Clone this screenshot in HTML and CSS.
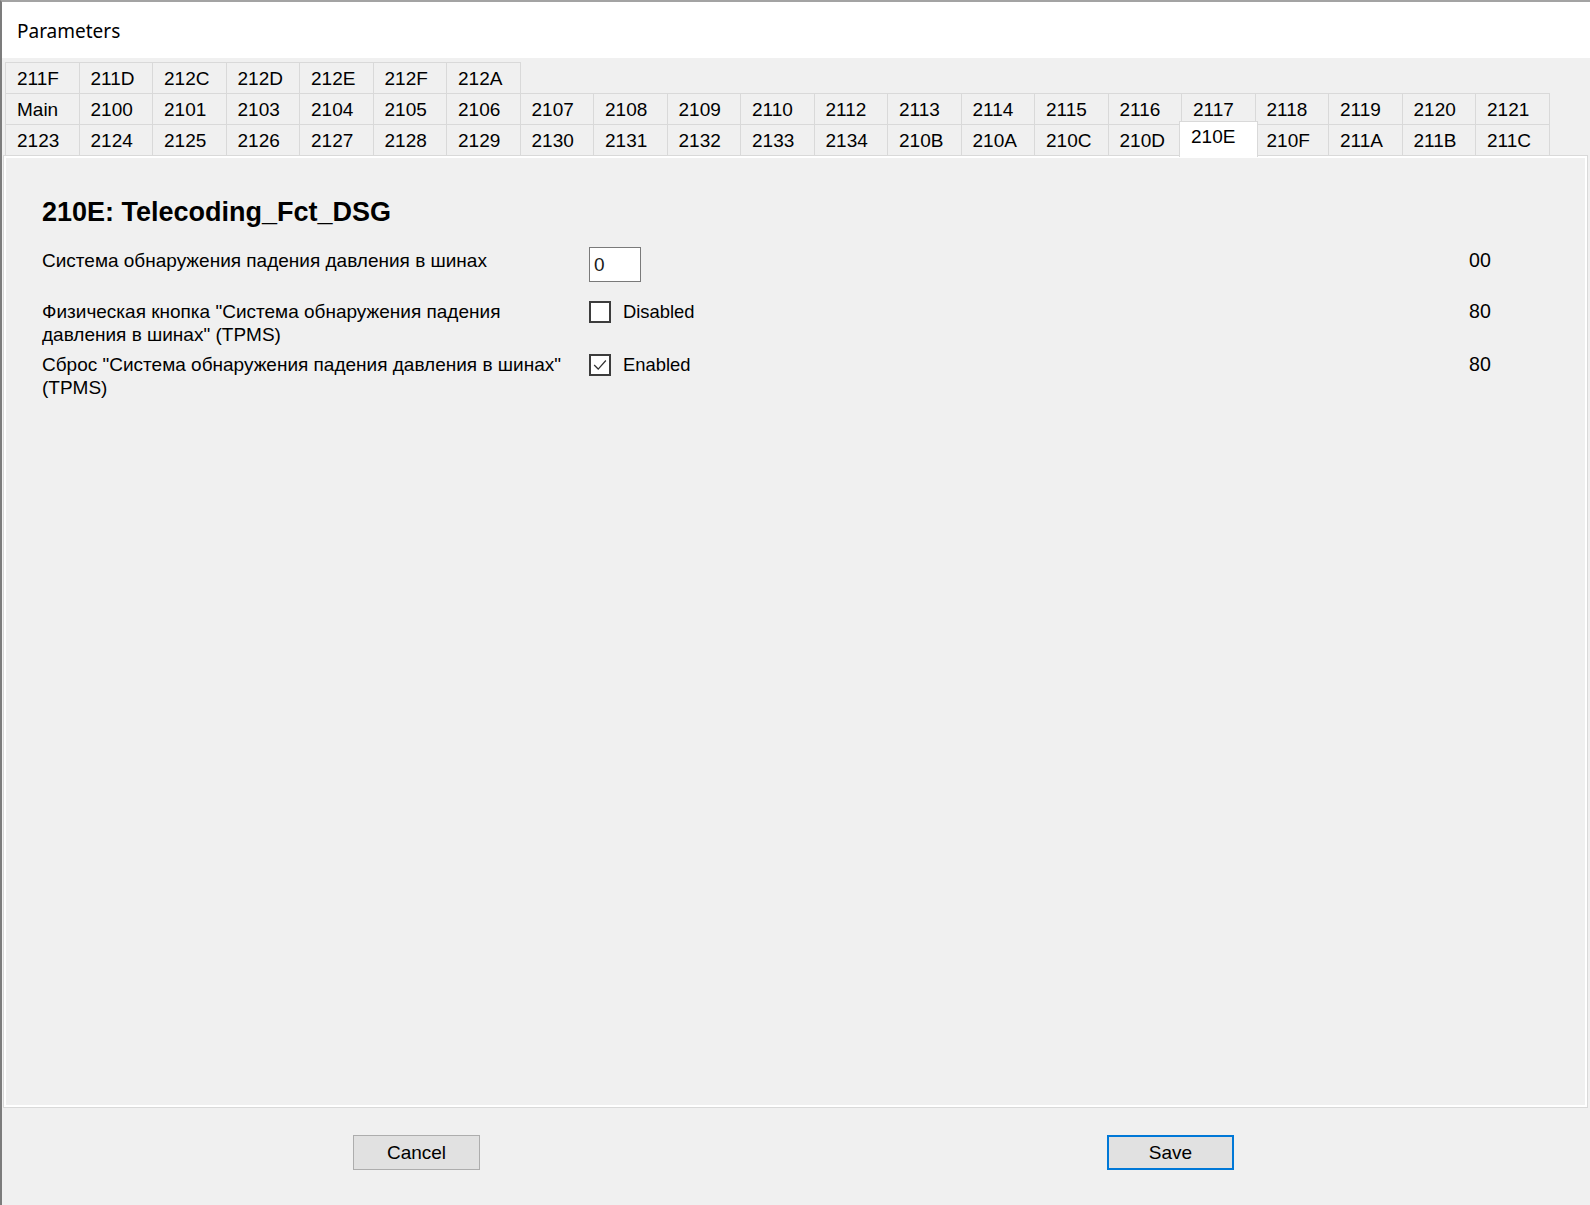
FILE: index.html
```html
<!DOCTYPE html>
<html lang="ru">
<head>
    <meta charset="UTF-8">
    <meta name="viewport" content="width=device-width, initial-scale=1.0">
    <title>Parameters</title>
    <link rel="stylesheet" href="styles.css">
</head>
<body>
    <div class="window">
        <div class="titlebar">Parameters</div>

        <div class="tabs">
            <div class="tab-row">
                <div class="tab">211F</div>
                <div class="tab">211D</div>
                <div class="tab">212C</div>
                <div class="tab">212D</div>
                <div class="tab">212E</div>
                <div class="tab">212F</div>
                <div class="tab">212A</div>
            </div>
            <div class="tab-row">
                <div class="tab">Main</div>
                <div class="tab">2100</div>
                <div class="tab">2101</div>
                <div class="tab">2103</div>
                <div class="tab">2104</div>
                <div class="tab">2105</div>
                <div class="tab">2106</div>
                <div class="tab">2107</div>
                <div class="tab">2108</div>
                <div class="tab">2109</div>
                <div class="tab">2110</div>
                <div class="tab">2112</div>
                <div class="tab">2113</div>
                <div class="tab">2114</div>
                <div class="tab">2115</div>
                <div class="tab">2116</div>
                <div class="tab">2117</div>
                <div class="tab">2118</div>
                <div class="tab">2119</div>
                <div class="tab">2120</div>
                <div class="tab">2121</div>
            </div>
            <div class="tab-row">
                <div class="tab">2123</div>
                <div class="tab">2124</div>
                <div class="tab">2125</div>
                <div class="tab">2126</div>
                <div class="tab">2127</div>
                <div class="tab">2128</div>
                <div class="tab">2129</div>
                <div class="tab">2130</div>
                <div class="tab">2131</div>
                <div class="tab">2132</div>
                <div class="tab">2133</div>
                <div class="tab">2134</div>
                <div class="tab">210B</div>
                <div class="tab">210A</div>
                <div class="tab">210C</div>
                <div class="tab">210D</div>
                <div class="tab active">210E</div>
                <div class="tab">210F</div>
                <div class="tab">211A</div>
                <div class="tab">211B</div>
                <div class="tab">211C</div>
            </div>
        </div>

        <div class="tab-page">
            <h1>210E: Telecoding_Fct_DSG</h1>

            <div class="param">
                <div class="param-label">Система обнаружения падения давления в шинах</div>
                <div class="param-control">
                    <div class="textbox">0</div>
                </div>
                <div class="param-value">00</div>
            </div>

            <div class="param">
                <div class="param-label">Физическая кнопка "Система обнаружения падения<br>давления в шинах" (TPMS)</div>
                <div class="param-control">
                    <span class="checkbox"></span>
                    <span class="check-text">Disabled</span>
                </div>
                <div class="param-value">80</div>
            </div>

            <div class="param">
                <div class="param-label">Сброс "Система обнаружения падения давления в шинах"<br>(TPMS)</div>
                <div class="param-control">
                    <span class="checkbox">
                        <svg width="20" height="20" viewBox="0 0 20 20"><path d="M3.5 10 L8 14.5 L16.5 5" fill="none" stroke="#333" stroke-width="1.4"/></svg>
                    </span>
                    <span class="check-text">Enabled</span>
                </div>
                <div class="param-value">80</div>
            </div>
        </div>

        <div class="buttons">
            <button type="button" class="btn">Cancel</button>
            <button type="button" class="btn btn-default">Save</button>
        </div>
    </div>
</body>
</html>
```

FILE: styles.css
```css
body {
    margin: 0;
    background-color: #f0f0f0;
    font-family: "Liberation Sans", Arial, sans-serif;
    color: #000;
}
.window {
    height: 1205px;
    box-sizing: border-box;
    border-left: 2px solid #7c7c7c;
    border-top: 2px solid #a3a3a3;
    background-color: #f0f0f0;
    display: flex;
    flex-direction: column;
}
.titlebar {
    height: 56px;
    line-height: 58px;
    padding-left: 15px;
    background-color: #fff;
    font-family: "Noto Sans", "Open Sans", sans-serif;
    font-size: 19px;
}

/* tab strip */
.tabs {
    padding: 4px 0 0 4px;
}
.tab-row {
    display: flex;
}
.tab-row + .tab-row {
    margin-top: -1px;
}
.tab {
    width: 74.5px;
    height: 32px;
    box-sizing: border-box;
    margin-left: -1px;
    padding-left: 11px;
    border: 1px solid #d9d9d9;
    line-height: 31px;
    font-size: 19px;
    white-space: nowrap;
}
.tab.active {
    position: relative;
    z-index: 1;
    width: 78.5px;
    height: 36px;
    margin: -3px -2px -1px -3px;
    padding-left: 11px;
    line-height: 29px;
    border-bottom: none;
    background-color: #fff;
}

/* page */
.tab-page {
    flex: 1;
    margin: -1px 2px 0 1px;
    padding: 40px 0 0 38px;
    border: 1px solid #d9d9d9;
    box-shadow: inset 0 0 0 2px #fff;
}
h1 {
    margin: 0 0 19px 0;
    font-size: 27px;
    line-height: 32px;
    font-weight: bold;
}
.param {
    display: grid;
    grid-template-columns: 547px 880px auto;
    align-items: start;
    min-height: 53px;
}
.param-label,
.param-value {
    font-size: 19px;
    line-height: 23px;
}
.param-value {
    font-size: 19.6px;
}
.param:first-of-type .param-label,
.param:first-of-type .param-value {
    margin-top: 2px;
}
.param-control {
    display: flex;
    align-items: center;
    gap: 12px;
}
.textbox {
    width: 52px;
    height: 35px;
    box-sizing: border-box;
    padding-left: 4px;
    border: 1px solid #7a7a7a;
    background-color: #fff;
    line-height: 33px;
    font-size: 19px;
    color: #1a1a1a;
}
.checkbox {
    width: 22px;
    height: 22px;
    box-sizing: border-box;
    border: 2px solid #3d3d3d;
    background-color: #fff;
    display: flex;
    align-items: center;
    justify-content: center;
}
.checkbox svg {
    display: block;
}
.check-text {
    font-size: 18.4px;
    line-height: 23px;
}

/* dialog buttons */
.buttons {
    height: 97px;
    box-sizing: border-box;
    display: flex;
    gap: 627px;
    padding: 27px 0 0 351px;
}
.btn {
    width: 127px;
    height: 35px;
    border: 1px solid #adadad;
    background-color: #e1e1e1;
    font-family: "Liberation Sans", Arial, sans-serif;
    font-size: 19px;
    color: #000;
    padding: 0;
}
.btn-default {
    border: 2px solid #0078d7;
}
```
